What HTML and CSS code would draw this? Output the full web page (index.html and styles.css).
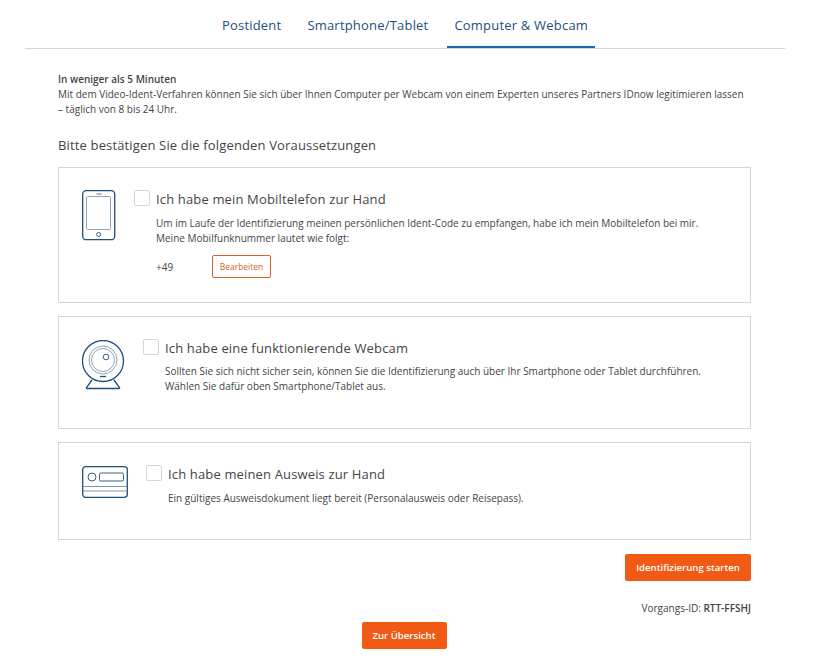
FILE: index.html
```html
<!DOCTYPE html>
<html lang="de">
<head>
    <meta charset="UTF-8">
    <meta name="viewport" content="width=device-width, initial-scale=1.0">
    <title>Identifizierung</title>
    <link rel="stylesheet" href="styles.css">
</head>

<body>

    <nav class="tabs">
        <a class="tab">Postident</a>
        <a class="tab">Smartphone/Tablet</a>
        <a class="tab active">Computer &amp; Webcam</a>
    </nav>

    <div class="content">
        <p class="intro">
            <strong>In weniger als 5 Minuten</strong><br>
            Mit dem Video-Ident-Verfahren können Sie sich über Ihnen Computer per Webcam von einem Experten unseres Partners IDnow legitimieren lassen<br>
            – täglich von 8 bis 24 Uhr.
        </p>

        <h2>Bitte bestätigen Sie die folgenden Voraussetzungen</h2>

        <div class="card card-phone">
            <svg class="icon" width="34" height="51" viewBox="0 0 34 51" fill="none" stroke="#1d4f7c">
                <rect x="0.7" y="0.7" width="32" height="49" rx="3.5" stroke-width="1.3"/>
                <rect x="4.500" y="6.500" width="24" height="33" rx="1" stroke="#6f8ca6" stroke-width="0.8"/>
                <path d="M14.5 4h5" stroke-width="0.8"/>
                <circle cx="16.700" cy="44.500" r="2" stroke-width="0.9"/>
            </svg>
            <div class="check"></div>
            <div class="card-body">
                <h3>Ich habe mein Mobiltelefon zur Hand</h3>
                <p>Um im Laufe der Identifizierung meinen persönlichen Ident-Code zu empfangen, habe ich mein Mobiltelefon bei mir.<br>
                Meine Mobilfunknummer lautet wie folgt:</p>
                <div class="phone-row">
                    <span class="phone-nr">+49</span>
                    <button class="btn-outline">Bearbeiten</button>
                </div>
            </div>
        </div>

        <div class="card card-webcam">
            <svg class="icon" width="44" height="50" viewBox="0 0 44 50" fill="none" stroke="#1d4f7c">
                <circle cx="21" cy="21" r="20.500" stroke-width="1.3"/>
                <circle cx="21" cy="20" r="14" stroke="#6f8ca6" stroke-width="0.8"/>
                <circle cx="21" cy="20" r="11.500" stroke="#6f8ca6" stroke-width="0.8"/>
                <circle cx="24" cy="17" r="2.800" stroke-width="0.9"/>
                <path d="M18 36.500h6" stroke-width="1.300"/>
                <path d="M10 40l-5.500 7.500q-.5 1 .8 1h31.400q1.300 0 .8-1l-5.500-7.500" stroke-width="1.300"/>
            </svg>
            <div class="check"></div>
            <div class="card-body">
                <h3>Ich habe eine funktionierende Webcam</h3>
                <p>Sollten Sie sich nicht sicher sein, können Sie die Identifizierung auch über Ihr Smartphone oder Tablet durchführen.<br>
                Wählen Sie dafür oben Smartphone/Tablet aus.</p>
            </div>
        </div>

        <div class="card card-id">
            <svg class="icon" width="46" height="32" viewBox="0 0 46 32" fill="none" stroke="#1d4f7c">
                <rect x="0.7" y="0.7" width="44.600" height="30.600" rx="3" stroke-width="1.300"/>
                <circle cx="10" cy="11" r="4" stroke-width="0.9"/>
                <rect x="17.500" y="7" width="24" height="8" rx="1.500" stroke-width="0.9"/>
                <path d="M1 20.500h44M1 25h44" stroke="#6f8ca6" stroke-width="0.9"/>
            </svg>
            <div class="check"></div>
            <div class="card-body">
                <h3>Ich habe meinen Ausweis zur Hand</h3>
                <p>Ein gültiges Ausweisdokument liegt bereit (Personalausweis oder Reisepass).</p>
            </div>
        </div>

        <div class="actions">
            <button class="btn">Identifizierung starten</button>
        </div>
        <div class="vorgang">Vorgangs-ID: <strong>RTT-FFSHJ</strong></div>
    </div>

    <div class="back">
        <button class="btn btn-small">Zur Übersicht</button>
    </div>

</body>
</html>
```

FILE: styles.css
```css
body {
    font-family: "Open Sans", sans-serif;
    color: #444;
    background: white;
    margin: 0;
    padding: 0 33px 0 25px;
    font-size: 10px;
}
.tabs {
    display: flex;
    justify-content: center;
    height: 48px;
    border-bottom: 1px solid #d6d6d6;
}
.tab {
    padding: 0 7px;
    margin: 0 6px;
    line-height: 50px;
    font-size: 13px;
    color: #1d4f7c;
    box-sizing: border-box;
    height: 48px;
    letter-spacing: 0.2px;
}
.tab.active {
    border-bottom: 2px solid #1e66b4;
}
.content {
    padding: 0 34px 0 33px;
}
.intro {
    margin: 23px 0 0 0;
    line-height: 15px;
}
.intro strong {
    font-weight: 600;
}
h2 {
    font-weight: 400;
    font-size: 13px;
    line-height: 18px;
    margin: 19px 0 13px 0;
    letter-spacing: 0.15px;
}
.card {
    display: flex;
    align-items: flex-start;
    border: 1px solid #d6d6d6;
    margin-bottom: 13px;
    box-sizing: border-box;
}
.card-phone {
    height: 136px;
    padding: 22px 0 0 23px;
}
.card-webcam {
    height: 113px;
    padding: 23px 0 0 23px;
}
.card-id {
    height: 98px;
    padding: 23px 0 0 23px;
}
.icon {
    flex: none;
}
.check {
    flex: none;
    box-sizing: border-box;
    width: 16px;
    height: 16px;
    border: 1px solid #d6d6d6;
    border-radius: 2px;
}
.card-body {
    margin-left: 6px;
}
.card-phone .check {
    margin: 0 0 0 18px;
}
.card-webcam .check {
    margin: -1px 0 0 17px;
}
.card-id .check {
    margin: -1px 0 0 18px;
}
.card-webcam .card-body {
    margin-top: -1px;
}
.card-id .card-body {
    margin-top: -1px;
}
h3 {
    font-weight: 400;
    font-size: 13px;
    line-height: 18px;
    margin: 0 0 8px 0;
    letter-spacing: 0.15px;
}
.card-webcam h3 {
    margin-bottom: 7px;
}
.card p {
    margin: 0;
    line-height: 15px;
}
.phone-row {
    display: flex;
    align-items: center;
    margin-top: 9px;
}
.phone-nr {
    width: 56px;
}
.btn-outline {
    font-family: inherit;
    font-size: 8.5px;
    color: #d9602c;
    background: white;
    border: 1px solid #d9602c;
    border-radius: 2px;
    width: 59px;
    height: 23px;
    padding: 0;
}
.actions {
    display: flex;
    justify-content: flex-end;
    margin-top: 14px;
}
.btn {
    font-family: inherit;
    font-weight: 600;
    font-size: 9.6px;
    color: white;
    background: #f05a14;
    border: 0;
    border-radius: 2px;
    width: 126px;
    height: 27px;
    padding: 0;
}
.vorgang {
    text-align: right;
    margin-top: 20px;
    line-height: 14px;
}
.vorgang strong {
    font-weight: 600;
}
.back {
    display: flex;
    justify-content: center;
    margin-top: 7px;
    padding-right: 2px;
}
.btn-small {
    width: 85px;
}
```
